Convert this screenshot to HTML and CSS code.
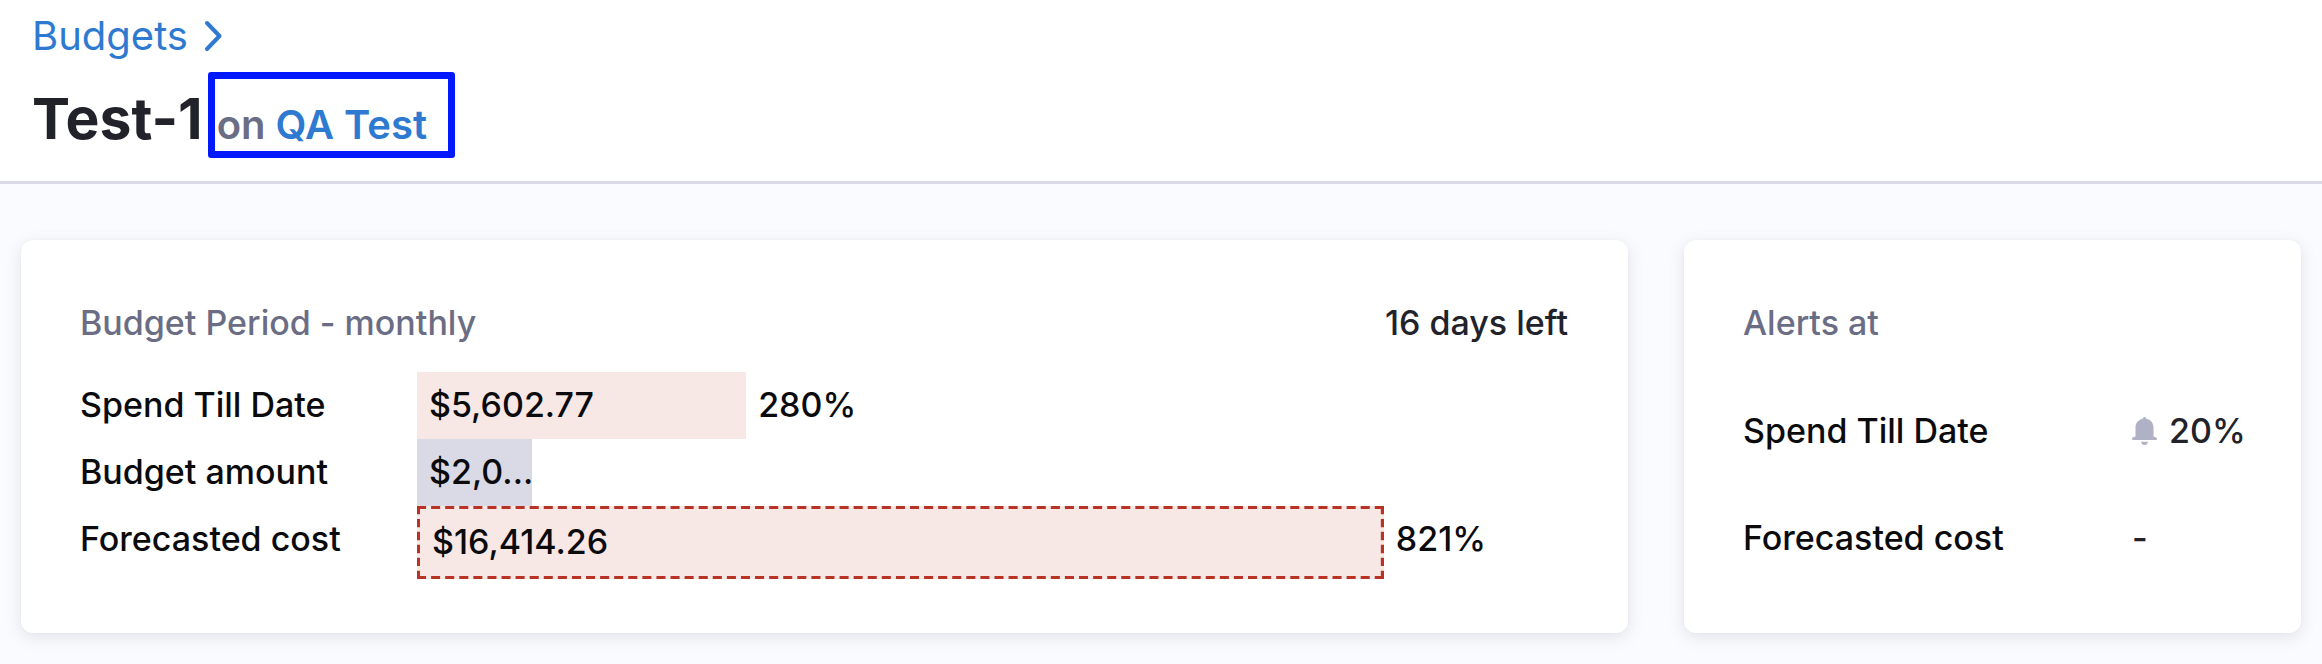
FILE: index.html
```html
<!DOCTYPE html>
<html lang="en">
<head>
<meta charset="utf-8">
<title>Test-1 - Budgets</title>
<link rel="stylesheet" href="styles.css">
</head>
<body>
<header class="page-header">
  <nav class="breadcrumb" aria-label="Breadcrumb">
    <a href="#budgets">Budgets</a>
    <svg class="chevron" viewBox="0 0 20 32" aria-hidden="true"><path d="M3 3L15.500 16L3 29" /></svg>
  </nav>
  <div class="heading">
    <h1>Test-1</h1>
    <p class="scope">on <a href="#qa-test">QA Test</a></p>
  </div>
</header>
<main class="cards">
  <section class="card">
    <div class="card-head">
      <h2>Budget Period - monthly</h2>
      <span class="days-left">16 days left</span>
    </div>
    <div class="bars">
      <div class="bar-row">
        <span class="bar-label">Spend Till Date</span>
        <div class="track">
          <span class="bar bar-spend" style="width: 28.600%">$5,602.77</span>
          <span class="percent">280%</span>
        </div>
      </div>
      <div class="bar-row">
        <span class="bar-label">Budget amount</span>
        <div class="track">
          <span class="bar bar-budget" style="width: 10%">$2,0...</span>
        </div>
      </div>
      <div class="bar-row">
        <span class="bar-label">Forecasted cost</span>
        <div class="track">
          <span class="bar bar-forecast" style="width: 84%">$16,414.26
            <svg class="dashes" aria-hidden="true">
              <line x1="0" y1="0" x2="100%" y2="0" pathLength="961"/>
              <line x1="0" y1="100%" x2="100%" y2="100%" pathLength="961"/>
              <line x1="0" y1="0" x2="0" y2="100%" pathLength="79"/>
              <line x1="100%" y1="0" x2="100%" y2="100%" pathLength="79"/>
            </svg>
          </span>
          <span class="percent">821%</span>
        </div>
      </div>
    </div>
  </section>
  <section class="card">
    <div class="card-head">
      <h2>Alerts at</h2>
    </div>
    <dl class="alerts">
      <dt>Spend Till Date</dt>
      <dd>
        <svg class="bell" viewBox="0 0 25 28" aria-hidden="true"><path d="M10.800 1.700a1.700 1.700 0 0 1 3.400 0C18.700 2.500 21.500 6 21.500 10.500V19.500L24.300 20.500Q25 20.800 25 21.700V22.200Q25 23 24 23H1Q0 23 0 22.200V21.700Q0 20.800 .7 20.500L3.500 19.500V10.500C3.500 6 6.300 2.500 10.800 1.700Z"/><path d="M9 24.800H16Q15.200 28 12.500 28T9 24.800Z"/></svg>
        20%
      </dd>
      <dt>Forecasted cost</dt>
      <dd>-</dd>
    </dl>
  </section>
</main>
</body>
</html>
```
FILE: styles.css
```css
* {
  box-sizing: border-box;
}

body {
  margin: 0;
  background: #fafbff;
  color: #0b0b0d;
  font: 500 34px/48px Inter, "Liberation Sans", sans-serif;
}

h1,
h2,
p,
dl,
dd {
  margin: 0;
}

a {
  color: #2f7ad1;
  text-decoration: none;
}

.page-header {
  padding: 12px 32px 28px;
  border-bottom: 3px solid #d9dae5;
  background: #fff;
}

.breadcrumb {
  display: flex;
  align-items: center;
  gap: 16px;
  font-size: 40px;
  font-weight: 400;
}

.chevron {
  width: 20px;
  height: 32px;
  fill: none;
  stroke: #2f7ad1;
  stroke-width: 4;
  stroke-linecap: round;
  stroke-linejoin: round;
}

.heading {
  display: flex;
  align-items: baseline;
  gap: 14px;
  margin-top: 25px;
}

h1 {
  color: #22222a;
  font-size: 57px;
  font-weight: 700;
  line-height: 68px;
}

.scope {
  position: relative;
  color: #6b6d85;
  font-size: 40px;
  font-weight: 600;
}

/* Highlight frame around the scope */
.scope::after {
  content: "";
  position: absolute;
  inset: -29px -28px -9px -9px;
  border: 7px solid #0019ff;
  border-radius: 3px;
  pointer-events: none;
}

.cards {
  display: grid;
  grid-template-columns: 1607fr 617fr;
  gap: 56px;
  padding: 56px 21px 30px;
}

.card {
  padding: 59px 60px 41px 59px;
  border-radius: 12px;
  background: #fff;
  box-shadow: 0 4px 16px rgba(96, 97, 112, 0.16), 0 0 2px rgba(40, 41, 61, 0.04);
}

.card-head {
  display: flex;
  justify-content: space-between;
}

h2 {
  color: #6b6d85;
  font-size: 34px;
  font-weight: 500;
}

.days-left {
  color: #22222a;
}

.bars {
  margin: 25px 0 13px;
}

.bar-row {
  display: grid;
  grid-template-columns: 337px 1fr;
  line-height: 65px;
}

.track {
  display: flex;
  gap: 12px;
  min-width: 0;
}

.bar {
  flex: none;
  padding: 0 0 2px 12px;
  white-space: nowrap;
}

.bar-spend,
.bar-forecast {
  background: #f7e8e5;
}

.bar-budget {
  background: #d9dae5;
}

.bar-forecast {
  position: relative;
  padding: 3px 3px 5px 15px;
}

/* Half of each edge stroke is clipped, which leaves a 3px line */
.dashes {
  position: absolute;
  inset: 0;
  width: 100%;
  height: 100%;
  overflow: hidden;
  stroke: #b83226;
  stroke-width: 6;
  stroke-dasharray: 9 5;
}

.alerts {
  display: grid;
  grid-template-columns: 1fr 109px;
  margin-top: 30px;
  line-height: 107px;
}

.alerts dd {
  display: flex;
  align-items: center;
  gap: 12px;
  color: #22222a;
}

.bell {
  flex: none;
  width: 25px;
  height: 28px;
  fill: #b0b1c4;
}
```
